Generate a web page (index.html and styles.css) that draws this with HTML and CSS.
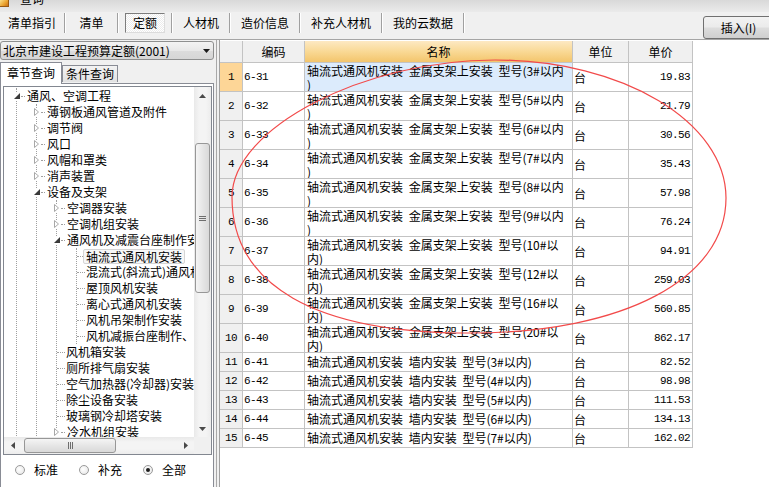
FILE: index.html
```html
<!DOCTYPE html>
<html lang="zh-CN">
<head>
<meta charset="utf-8">
<title>查询</title>
<link rel="stylesheet" href="styles.css">
</head>
<body>
<div class="window">
  <div class="titlebar"><span class="app-icon"></span><span class="title">查询</span></div>
  <div class="toolbar">
    <div class="tabs">
      <span class="tab first">清单指引</span>
      <span class="tab">清单</span>
      <span class="tab active"><span class="tab-box">定额</span></span>
      <span class="tab">人材机</span>
      <span class="tab">造价信息</span>
      <span class="tab">补充人材机</span>
      <span class="tab">我的云数据</span>
    </div>
    <button class="insert">插入(I)</button>
  </div>
  <div class="main">
    <aside class="left">
      <div class="combo">
        <span class="combo-text">北京市建设工程预算定额(2001)</span>
        <svg class="combo-arrow" width="7" height="4" viewBox="0 0 7 4"><path d="M0 0H7L3.5 4Z" fill="#1a1a1a"/></svg>
      </div>
      <div class="qtabs">
        <span class="qtab active">章节查询</span>
        <span class="qtab">条件查询</span>
      </div>
      <div class="qpanel">
        <div class="treebox">
          <div class="viewport">
            <ul class="tree root">
              <li>
                <div class="row"><span class="tw"><svg width="6" height="6" viewBox="0 0 6 6"><path d="M6 0V6H0Z" fill="#3a3a3a"/></svg></span><span class="dash"></span><span class="lbl">通风、空调工程</span></div>
                <ul class="tree">
                  <li><div class="row"><span class="tw"><svg width="5" height="8" viewBox="0 0 5 8"><path d="M0.5 0.5L4.5 4L0.5 7.5Z" fill="#fff" stroke="#a8a8a8"/></svg></span><span class="dash"></span><span class="lbl">薄钢板通风管道及附件</span></div></li>
                  <li><div class="row"><span class="tw"><svg width="5" height="8" viewBox="0 0 5 8"><path d="M0.5 0.5L4.5 4L0.5 7.5Z" fill="#fff" stroke="#a8a8a8"/></svg></span><span class="dash"></span><span class="lbl">调节阀</span></div></li>
                  <li><div class="row"><span class="tw"><svg width="5" height="8" viewBox="0 0 5 8"><path d="M0.5 0.5L4.5 4L0.5 7.5Z" fill="#fff" stroke="#a8a8a8"/></svg></span><span class="dash"></span><span class="lbl">风口</span></div></li>
                  <li><div class="row"><span class="tw"><svg width="5" height="8" viewBox="0 0 5 8"><path d="M0.5 0.5L4.5 4L0.5 7.5Z" fill="#fff" stroke="#a8a8a8"/></svg></span><span class="dash"></span><span class="lbl">风帽和罩类</span></div></li>
                  <li><div class="row"><span class="tw"><svg width="5" height="8" viewBox="0 0 5 8"><path d="M0.5 0.5L4.5 4L0.5 7.5Z" fill="#fff" stroke="#a8a8a8"/></svg></span><span class="dash"></span><span class="lbl">消声装置</span></div></li>
                  <li>
                    <div class="row"><span class="tw"><svg width="6" height="6" viewBox="0 0 6 6"><path d="M6 0V6H0Z" fill="#3a3a3a"/></svg></span><span class="dash"></span><span class="lbl">设备及支架</span></div>
                    <ul class="tree">
                      <li><div class="row"><span class="tw"><svg width="5" height="8" viewBox="0 0 5 8"><path d="M0.5 0.5L4.5 4L0.5 7.5Z" fill="#fff" stroke="#a8a8a8"/></svg></span><span class="dash"></span><span class="lbl">空调器安装</span></div></li>
                      <li><div class="row"><span class="tw"><svg width="5" height="8" viewBox="0 0 5 8"><path d="M0.5 0.5L4.5 4L0.5 7.5Z" fill="#fff" stroke="#a8a8a8"/></svg></span><span class="dash"></span><span class="lbl">空调机组安装</span></div></li>
                      <li>
                        <div class="row"><span class="tw"><svg width="6" height="6" viewBox="0 0 6 6"><path d="M6 0V6H0Z" fill="#3a3a3a"/></svg></span><span class="dash"></span><span class="lbl">通风机及减震台座制作安装</span></div>
                        <ul class="tree">
                          <li><div class="row"><span class="dash leaf"></span><span class="lbl sel">轴流式通风机安装</span></div></li>
                          <li><div class="row"><span class="dash leaf"></span><span class="lbl">混流式(斜流式)通风机安装</span></div></li>
                          <li><div class="row"><span class="dash leaf"></span><span class="lbl">屋顶风机安装</span></div></li>
                          <li><div class="row"><span class="dash leaf"></span><span class="lbl">离心式通风机安装</span></div></li>
                          <li><div class="row"><span class="dash leaf"></span><span class="lbl">风机吊架制作安装</span></div></li>
                          <li><div class="row"><span class="dash leaf"></span><span class="lbl">风机减振台座制作、安装</span></div></li>
                        </ul>
                      </li>
                      <li><div class="row"><span class="dash leaf"></span><span class="lbl">风机箱安装</span></div></li>
                      <li><div class="row"><span class="dash leaf"></span><span class="lbl">厕所排气扇安装</span></div></li>
                      <li><div class="row"><span class="dash leaf"></span><span class="lbl">空气加热器(冷却器)安装</span></div></li>
                      <li><div class="row"><span class="dash leaf"></span><span class="lbl">除尘设备安装</span></div></li>
                      <li><div class="row"><span class="dash leaf"></span><span class="lbl">玻璃钢冷却塔安装</span></div></li>
                      <li><div class="row"><span class="tw"><svg width="5" height="8" viewBox="0 0 5 8"><path d="M0.5 0.5L4.5 4L0.5 7.5Z" fill="#fff" stroke="#a8a8a8"/></svg></span><span class="dash"></span><span class="lbl">冷水机组安装</span></div></li>
                    </ul>
                  </li>
                </ul>
              </li>
            </ul>
          </div>
          <div class="vscroll">
            <div class="sb-btn"><svg width="7" height="4" viewBox="0 0 7 4"><path d="M3.5 0L7 4H0Z" fill="#4a4a4a"/></svg></div>
            <div class="vtrack"><div class="vthumb"><svg width="7" height="5" viewBox="0 0 7 5"><path d="M0 0.5H7M0 2.5H7M0 4.5H7" stroke="#6e6e6e" stroke-width="1"/></svg></div></div>
            <div class="sb-btn"><svg width="7" height="4" viewBox="0 0 7 4"><path d="M0 0H7L3.5 4Z" fill="#4a4a4a"/></svg></div>
          </div>
          <div class="hscroll">
            <div class="sb-btn"><svg width="4" height="7" viewBox="0 0 4 7"><path d="M0 3.5L4 0V7Z" fill="#4a4a4a"/></svg></div>
            <div class="htrack"><div class="hthumb"><svg width="5" height="7" viewBox="0 0 5 7"><path d="M0.5 0V7M2.5 0V7M4.5 0V7" stroke="#6e6e6e" stroke-width="1"/></svg></div></div>
            <div class="sb-btn"><svg width="4" height="7" viewBox="0 0 4 7"><path d="M4 3.5L0 0V7Z" fill="#4a4a4a"/></svg></div>
          </div>
          <div class="sb-corner"></div>
        </div>
        <div class="radios">
          <span class="radio"><i class="dot"></i>标准</span>
          <span class="radio"><i class="dot"></i>补充</span>
          <span class="radio"><i class="dot on"></i>全部</span>
        </div>
      </div>
    </aside>
    <div class="splitter"></div>
    <section class="grid-wrap">
      <div class="grid">
        <div class="gr gh">
          <div class="num"></div><div>编码</div><div class="hl">名称</div><div>单位</div><div>单价</div>
        </div>
        <div class="gr tall cur"><div class="num">1</div><div class="code">6-31</div><div class="name">轴流式通风机安装 金属支架上安装 型号(3#以内<br>)</div><div class="unit">台</div><div class="price">19.83</div></div>
        <div class="gr tall"><div class="num">2</div><div class="code">6-32</div><div class="name">轴流式通风机安装 金属支架上安装 型号(5#以内<br>)</div><div class="unit">台</div><div class="price">21.79</div></div>
        <div class="gr tall"><div class="num">3</div><div class="code">6-33</div><div class="name">轴流式通风机安装 金属支架上安装 型号(6#以内<br>)</div><div class="unit">台</div><div class="price">30.56</div></div>
        <div class="gr tall"><div class="num">4</div><div class="code">6-34</div><div class="name">轴流式通风机安装 金属支架上安装 型号(7#以内<br>)</div><div class="unit">台</div><div class="price">35.43</div></div>
        <div class="gr tall"><div class="num">5</div><div class="code">6-35</div><div class="name">轴流式通风机安装 金属支架上安装 型号(8#以内<br>)</div><div class="unit">台</div><div class="price">57.98</div></div>
        <div class="gr tall"><div class="num">6</div><div class="code">6-36</div><div class="name">轴流式通风机安装 金属支架上安装 型号(9#以内<br>)</div><div class="unit">台</div><div class="price">76.24</div></div>
        <div class="gr tall"><div class="num">7</div><div class="code">6-37</div><div class="name">轴流式通风机安装 金属支架上安装 型号(10#以<br>内)</div><div class="unit">台</div><div class="price">94.91</div></div>
        <div class="gr tall"><div class="num">8</div><div class="code">6-38</div><div class="name">轴流式通风机安装 金属支架上安装 型号(12#以<br>内)</div><div class="unit">台</div><div class="price">259.03</div></div>
        <div class="gr tall"><div class="num">9</div><div class="code">6-39</div><div class="name">轴流式通风机安装 金属支架上安装 型号(16#以<br>内)</div><div class="unit">台</div><div class="price">560.85</div></div>
        <div class="gr tall"><div class="num">10</div><div class="code">6-40</div><div class="name">轴流式通风机安装 金属支架上安装 型号(20#以<br>内)</div><div class="unit">台</div><div class="price">862.17</div></div>
        <div class="gr short"><div class="num">11</div><div class="code">6-41</div><div class="name">轴流式通风机安装 墙内安装 型号(3#以内)</div><div class="unit">台</div><div class="price">82.52</div></div>
        <div class="gr short"><div class="num">12</div><div class="code">6-42</div><div class="name">轴流式通风机安装 墙内安装 型号(4#以内)</div><div class="unit">台</div><div class="price">98.98</div></div>
        <div class="gr short"><div class="num">13</div><div class="code">6-43</div><div class="name">轴流式通风机安装 墙内安装 型号(5#以内)</div><div class="unit">台</div><div class="price">111.53</div></div>
        <div class="gr short"><div class="num">14</div><div class="code">6-44</div><div class="name">轴流式通风机安装 墙内安装 型号(6#以内)</div><div class="unit">台</div><div class="price">134.13</div></div>
        <div class="gr short"><div class="num">15</div><div class="code">6-45</div><div class="name">轴流式通风机安装 墙内安装 型号(7#以内)</div><div class="unit">台</div><div class="price">162.02</div></div>
      </div>
    </section>
  </div>
</div>
<svg class="annot" width="769" height="487" viewBox="0 0 769 487"><path d="M232 197C232 128.5 363.5 60 495 60C622.5 60 726 121.8 726 198C726 279 623.6 333 470 333C315.3 333 232 285.4 232 197Z" fill="none" stroke="#f24a4a" stroke-width="1.2"/></svg>
</body>
</html>
```
FILE: styles.css
```css
* { box-sizing: border-box; }
html, body { margin: 0; padding: 0; }
body {
  width: 769px;
  height: 487px;
  overflow: hidden;
  position: relative;
  background: #f0f0f0;
  font-family: "Noto Sans CJK SC", "Noto Sans", sans-serif;
  font-size: 12px;
  color: #000;
}
.window { display: flex; flex-direction: column; height: 487px; }

/* title strip */
.titlebar {
  height: 12px;
  flex: none;
  display: flex;
  align-items: flex-start;
  overflow: hidden;
  background: linear-gradient(#d9d9d9, #ebebeb);
}
.app-icon {
  width: 9px;
  height: 7px;
  flex: none;
  background: linear-gradient(135deg, #fbe08a, #eaa12c 60%, #c9701a);
  border-right: 1px solid #9a5a12;
  border-bottom: 1px solid #9a5a12;
}
.title { margin-left: 11px; margin-top: -8px; line-height: 14px; font-size: 12px; }

/* toolbar */
.toolbar {
  height: 28px;
  flex: none;
  display: flex;
  align-items: flex-start;
  padding-top: 1px;
  border-bottom: 1px solid #a5a5a5;
}
.tabs { display: flex; height: 20px; }
.tab {
  min-width: 52px;
  padding: 0 10px;
  display: flex;
  align-items: center;
  justify-content: center;
  border-right: 1px solid #a0a0a0;
  box-shadow: 1px 0 0 #ffffff;
  margin-right: 1px;
  line-height: 18px;
}
.tab.first { padding: 0 8px; }
.tab.active { padding: 0 6px; }
.tab-box {
  display: block;
  height: 20px;
  padding: 0 7px;
  line-height: 18px;
  border: 1px solid;
  border-color: #7c7c7c #dcdcdc #dcdcdc #7c7c7c;
  background: repeating-conic-gradient(#ffffff 0 25%, #ececec 0 50%) 0 0 / 2px 2px;
}
.insert {
  margin-left: auto;
  margin-top: 3px;
  margin-right: -5px;
  width: 71px;
  height: 23px;
  padding: 0;
  border: 1px solid #707070;
  border-radius: 3px;
  background: linear-gradient(#f2f2f2, #ebebeb 48%, #dddddd 52%, #cfcfcf);
  font: inherit;
  color: #000;
}

/* main */
.main { flex: 1; display: flex; min-height: 0; }
.left {
  width: 214px;
  flex: none;
  display: flex;
  flex-direction: column;
  padding-top: 1px;
}
.combo {
  height: 19px;
  flex: none;
  display: flex;
  align-items: center;
  padding: 0 3px 0 2px;
  border: 1px solid #8e8f8f;
  border-radius: 3px;
  background: linear-gradient(#f3f3f3, #e8e8e8 50%, #dcdcdc 52%, #d6d6d6);
  white-space: nowrap;
}
.combo-text { flex: 1; line-height: 16px; }
.combo-arrow { flex: none; }

.qtabs {
  height: 21px;
  flex: none;
  margin-top: 2px;
  display: flex;
  align-items: flex-end;
  position: relative;
  z-index: 1;
}
.qtab {
  height: 17px;
  padding: 0 3px;
  line-height: 15px;
  border: 1px solid #898c95;
  border-bottom: none;
  background: linear-gradient(#f3f3f3, #e1e1e1);
  margin-bottom: 1px;
}
.qtab.active {
  height: 22px;
  padding: 0 6px;
  line-height: 20px;
  background: #ffffff;
  margin-bottom: -1px;
}
.qpanel {
  flex: 1;
  display: flex;
  flex-direction: column;
  min-height: 0;
  background: #ffffff;
  border: 1px solid #898c95;
  border-bottom: none;
  padding: 2px 1px 0 2px;
}
.treebox {
  height: 369px;
  flex: none;
  display: grid;
  grid-template-columns: 1fr 17px;
  grid-template-rows: 1fr 17px;
  border: 1px solid #828790;
}
.viewport {
  overflow: hidden;
  padding-top: 1px;
  white-space: nowrap;
}
.tree {
  list-style: none;
  margin: 0 0 0 19px;
  padding: 0;
  border-left: 1px dotted #a0a0a0;
}
.tree.root { margin-left: 12px; }
.row {
  height: 16px;
  display: flex;
  align-items: center;
}
.tw {
  flex: none;
  width: 9px;
  height: 9px;
  margin-left: -5px;
  display: flex;
  align-items: center;
  justify-content: center;
  background: #ffffff;
}
.dash {
  flex: none;
  width: 4px;
  margin-right: 2px;
  border-top: 1px dotted #a0a0a0;
}
.dash.leaf { width: 8px; margin-right: 1px; }
.lbl { line-height: 16px; }
.lbl.sel {
  line-height: 13px;
  padding: 0 2px;
  margin-left: -3px;
  border: 1px solid #d5d5d5;
  border-radius: 2px;
  background: #f7f7f7;
}

/* scrollbars */
.vscroll {
  display: flex;
  flex-direction: column;
  background: linear-gradient(90deg, #e9e9e9, #f4f4f4 30%, #f4f4f4 70%, #ececec);
}
.hscroll {
  display: flex;
  background: linear-gradient(#e9e9e9, #f4f4f4 30%, #f4f4f4 70%, #ececec);
}
.sb-btn {
  flex: none;
  width: 17px;
  height: 17px;
  display: flex;
  align-items: center;
  justify-content: center;
}
.vtrack { flex: 1; padding-top: 39px; }
.vthumb {
  height: 150px;
  margin: 0 1px;
  display: flex;
  align-items: center;
  justify-content: center;
  border: 1px solid #979797;
  border-radius: 3px;
  background: linear-gradient(90deg, #f5f5f5, #e6e6e6 50%, #d9d9d9);
}
.htrack { flex: 1; padding-left: 3px; }
.hthumb {
  width: 92px;
  height: 15px;
  margin-top: 1px;
  display: flex;
  align-items: center;
  justify-content: center;
  border: 1px solid #979797;
  border-radius: 3px;
  background: linear-gradient(#f5f5f5, #e6e6e6 50%, #d9d9d9);
}
.sb-corner { background: #f0f0f0; }

/* radios */
.radios {
  flex: 1;
  display: flex;
  align-items: center;
  padding-left: 12px;
  padding-bottom: 2px;
}
.radio { display: flex; align-items: center; margin-right: 21px; line-height: 16px; }
.dot {
  width: 10px;
  height: 10px;
  margin-right: 9px;
  border-radius: 50%;
  border: 1px solid #9a9a9a;
  background: radial-gradient(circle at 40% 40%, #ffffff, #e4e4e4);
  display: flex;
  align-items: center;
  justify-content: center;
}
.dot.on::after {
  content: "";
  width: 4px;
  height: 4px;
  border-radius: 50%;
  background: #1e1e1e;
}

/* grid */
.splitter {
  width: 5px;
  flex: none;
  background: linear-gradient(90deg, #f0f0f0 0 2px, #a8a8a8 2px 3px, #f0f0f0 3px);
}
.grid-wrap {
  flex: 1;
  background: #ffffff;
  border-left: 1px solid #a0a0a0;
  padding-top: 1px;
}
.grid { width: 473px; }
.gr {
  display: grid;
  grid-template-columns: 23px 62px 268px 56px 64px;
}
.gr > div {
  border-right: 1px solid #c3c3c3;
  border-bottom: 1px solid #c3c3c3;
  display: flex;
  align-items: center;
  white-space: nowrap;
  overflow: hidden;
}
.gh { height: 22px; }
.gh > div { background: #f0f0f0; justify-content: center; }
.gh > div.hl { background: linear-gradient(#fde9c3, #f9d995 50%, #f3c56c); }
.tall { height: 29px; }
.short { height: 19px; }
.gr > div.num {
  background: #f0f0f0;
  justify-content: center;
  font-family: "Liberation Mono", "DejaVu Sans Mono", monospace;
  font-size: 11px;
  letter-spacing: -0.6px;
}
.cur > div.num { background: #fdd697; }
.cur > div.name { background: #dcebfc; }
.gr > div.code {
  padding-left: 1px;
  font-family: "Liberation Mono", "DejaVu Sans Mono", monospace;
  font-size: 11px;
  letter-spacing: -0.6px;
}
.gr > div.name {
  display: block;
  padding: 1px 2px 0 2px;
  line-height: 13.5px;
  word-spacing: 3px;
}
.short > div.name { display: flex; padding-top: 0; line-height: 16px; }
.gr > div.unit { padding-left: 1px; }
.gr > div.price {
  justify-content: flex-end;
  padding-right: 2px;
  font-family: "Liberation Mono", "DejaVu Sans Mono", monospace;
  font-size: 11px;
  letter-spacing: -0.6px;
}

/* hand-drawn annotation over the screenshot */
.annot {
  position: absolute;
  left: 0;
  top: 0;
  pointer-events: none;
}
```
